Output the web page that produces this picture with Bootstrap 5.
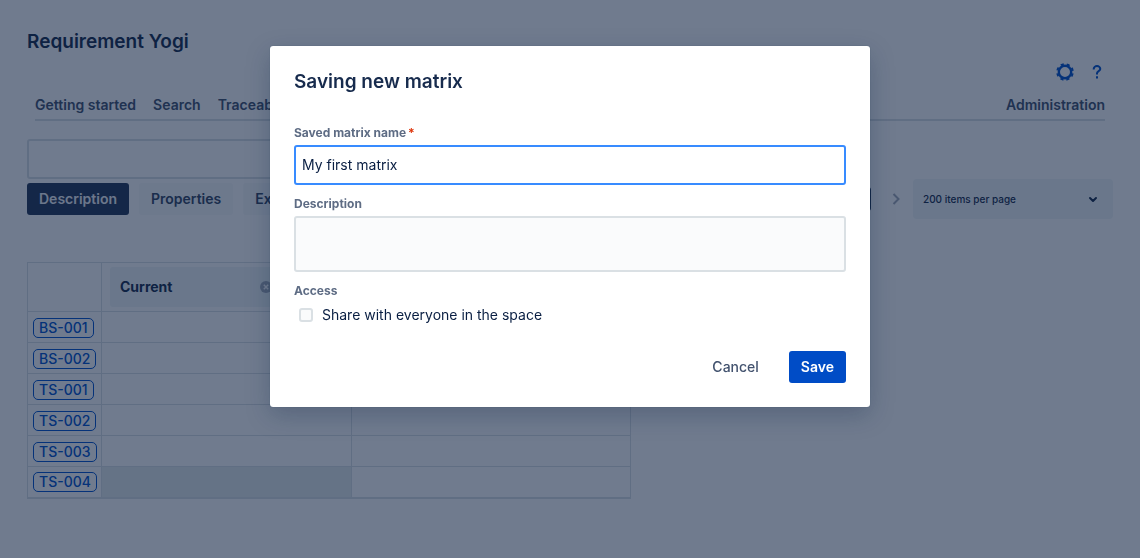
<!DOCTYPE html>
<html lang="en">
<head>
<meta charset="utf-8">
<meta name="viewport" content="width=device-width, initial-scale=1">
<title>Requirement Yogi</title>
<link href="https://cdn.jsdelivr.net/npm/bootstrap@5.3.0/dist/css/bootstrap.min.css" rel="stylesheet">
<style>
  :root { --ink: #172b4d; --ink-soft: #344563; --line: #dae0e4; --blue: #0052cc; }
  body { font-family: Inter, "Liberation Sans", sans-serif; font-size: 14px; line-height: 20px; color: var(--ink); overflow: hidden; }
  .page { padding: 30px 27px; }
  .title { font-size: 19px; line-height: 24px; font-weight: 600; margin: 0; }
  .tools { padding: 8px 8px 0; gap: 14px; }
  .tool { width: 16px; height: 20px; color: var(--blue); }
  .tool-wide { width: 20px; }
  .tabs { margin: 12px 8px 18px; border-bottom: 2px solid var(--line); padding-bottom: 3px; gap: 17px; }
  .tabs a { color: #42526e; font-weight: 600; text-decoration: none; line-height: 22px; }
  .query { height: 40px; border: 2px solid var(--line); border-radius: 3px; padding: 0 8px; }
  .chip { height: 32px; padding: 0 12px; border: 0; border-radius: 3px; background: #f7f9fb; color: var(--ink-soft); font-size: 14px; font-weight: 600; line-height: 20px; }
  .chip-on { background: #253858; color: #f4f5f7; }
  .current { width: 32px; height: 24px; padding: 0; }
  .next { width: 42px; color: #a5adba; }
  .pages { width: 200px; height: 40px; }
  .pages select { height: 40px; font-size: 10px; font-weight: 500; border: 0; border-radius: 4px; background: #f0f6f7; color: var(--ink); padding: 0 10px; appearance: none; }
  .pages svg { right: 14px; top: 14px; pointer-events: none; }
  .matrix { width: 604px; max-width: 100%; margin-top: 43px; table-layout: fixed; border-collapse: collapse; border-bottom: 2px solid var(--line); }
  .matrix th, .matrix td { border: 1px solid var(--line); height: 31px; padding: 0 5px; vertical-align: middle; }
  .matrix thead th { height: 49px; padding: 4px 8px; }
  .col-key { width: 74px; }
  .col-current { width: 250px; }
  .head-box { height: 40px; background: #f0f6f7; border-radius: 3px; font-weight: 700; padding: 0 71px 0 10px; }
  .key { display: block; width: max-content; border: 1px solid var(--blue); border-radius: 5px; color: var(--blue); font-weight: 500; line-height: 18px; padding: 0 5px; text-decoration: none; margin-top: 1px; }
  .matrix .empty { background: #e5eded; }
  .modal { background: rgba(9, 27, 60, .58); }
  .modal-dialog { max-width: 600px; margin: 46px auto; }
  .modal-content { border: 0; border-radius: 3px; padding: 24px; color: var(--ink); box-shadow: 0 0 1px rgba(9, 30, 66, .4), 0 8px 24px rgba(9, 30, 66, .25); }
  .modal-title { font-size: 19px; line-height: 24px; font-weight: 600; margin-bottom: 31px; }
  .caption { display: block; font-size: 12px; line-height: 16px; font-weight: 700; color: #5e6c84; margin-bottom: 4px; }
  .caption span { color: #de350b; margin-left: 2px; }
  .field { border: 2px solid var(--line); border-radius: 3px; background: #fafbfc; color: #091e42; font-size: 14px; line-height: 20px; padding: 7px 6px 9px; margin-bottom: 11px; resize: none; }
  .field:focus, .field-active { border-color: #388bff; background: #fff; box-shadow: none; color: #091e42; }
  .field-name { height: 40px; }
  .field-text { height: 56px; }
  .share { margin: 6px 0 26px 5px; gap: 9px; min-height: 0; padding: 0; color: #091e42; }
  .share .form-check-input { float: none; width: 14px; height: 14px; margin: 0; border: 2px solid var(--line); border-radius: 3px; background-color: #fafbfc; }
  .act { height: 32px; border: 0; border-radius: 3px; padding: 0 12px; font-size: 14px; font-weight: 500; line-height: 20px; color: #42526e; }
  .act-save { background: #004cc6; color: #fff; font-weight: 600; }
</style>
</head>
<body>
<main class="page">
  <h1 class="title">Requirement Yogi</h1>
  <div class="tools d-flex justify-content-end">
    <button class="tool tool-wide btn p-0 border-0 d-flex align-items-center justify-content-center" aria-label="Settings">
      <svg width="18" height="18" viewBox="0 0 18 18" fill="none" stroke="currentColor"><circle cx="9" cy="9" r="6.2" stroke-width="2.4"/><circle cx="9" cy="9" r="7.9" stroke-width="1.8" stroke-dasharray="3.2 3.005" stroke-dashoffset="-1.5"/></svg>
    </button>
    <button class="tool btn p-0 border-0 d-flex align-items-center justify-content-center" aria-label="Help">
      <svg width="10" height="14" viewBox="0 0 10 14" fill="none" stroke="currentColor" stroke-width="2"><path d="M1.7 4.6V4a3.3 3 0 0 1 6.6 0c0 2-3.3 2.3-3.3 4.2v1.3" stroke-linejoin="round"/><path d="M5 11.3v2.2"/></svg>
    </button>
  </div>
  <nav class="tabs d-flex text-nowrap">
    <a href="#">Getting started</a>
    <a href="#">Search</a>
    <a href="#">Traceability</a>
    <a href="#" class="ms-auto">Administration</a>
  </nav>
  <input class="query d-block w-75" type="text" aria-label="Search query">
  <div class="d-flex align-items-center">
    <div class="d-flex" style="gap:10px">
      <button class="chip chip-on">Description</button>
      <button class="chip">Properties</button>
      <button class="chip">Extra</button>
    </div>
    <button class="chip chip-on current ms-auto">1</button>
    <button class="next btn border-0 p-0 d-flex justify-content-center ps-2" aria-label="Next page">
      <svg width="8" height="12" viewBox="0 0 8 12" fill="none" stroke="currentColor" stroke-width="2"><path d="M1.5 1 6.5 6l-5 5"/></svg>
    </button>
    <div class="pages position-relative">
      <select class="w-100" aria-label="Page size"><option>200 items per page</option></select>
      <svg class="position-absolute" width="12" height="12" viewBox="0 0 12 12" fill="none" stroke="currentColor" stroke-width="2" stroke-linecap="round" stroke-linejoin="round"><path d="M3 5l3 3 3-3"/></svg>
    </div>
  </div>
  <table class="matrix">
    <colgroup><col class="col-key"><col class="col-current"><col></colgroup>
    <thead>
      <tr>
        <th></th>
        <th><div class="head-box d-flex align-items-center justify-content-between">Current
          <svg width="12" height="12" viewBox="0 0 12 12"><circle cx="6" cy="6" r="6" fill="#a5adba"/><path d="M3.8 3.8l4.4 4.4M8.2 3.8 3.8 8.2" stroke="#fff" stroke-width="1.5"/></svg></div></th>
        <th></th>
      </tr>
    </thead>
    <tbody>
      <tr><td><a class="key" href="#">BS-001</a></td><td></td><td></td></tr>
      <tr><td><a class="key" href="#">BS-002</a></td><td></td><td></td></tr>
      <tr><td><a class="key" href="#">TS-001</a></td><td></td><td></td></tr>
      <tr><td><a class="key" href="#">TS-002</a></td><td></td><td></td></tr>
      <tr><td><a class="key" href="#">TS-003</a></td><td></td><td></td></tr>
      <tr><td><a class="key" href="#">TS-004</a></td><td class="empty"></td><td></td></tr>
    </tbody>
  </table>
</main>

<div class="modal d-block" role="dialog" aria-modal="true" aria-labelledby="dialog-title">
  <div class="modal-dialog">
    <form class="modal-content">
      <h2 class="modal-title" id="dialog-title">Saving new matrix</h2>
      <label class="caption" for="matrix-name">Saved matrix name<span>*</span></label>
      <input class="form-control field field-name field-active" id="matrix-name" type="text" value="My first matrix">
      <label class="caption" for="matrix-description">Description</label>
      <textarea class="form-control field field-text" id="matrix-description"></textarea>
      <div class="caption mb-0">Access</div>
      <div class="form-check share d-flex align-items-center">
        <input class="form-check-input" type="checkbox" id="share">
        <label for="share">Share with everyone in the space</label>
      </div>
      <div class="d-flex justify-content-end" style="gap:18px">
        <button class="btn act" type="button">Cancel</button>
        <button class="btn act act-save" type="submit">Save</button>
      </div>
    </form>
  </div>
</div>
<script src="https://cdn.jsdelivr.net/npm/bootstrap@5.3.0/dist/js/bootstrap.bundle.min.js"></script>
</body>
</html>
